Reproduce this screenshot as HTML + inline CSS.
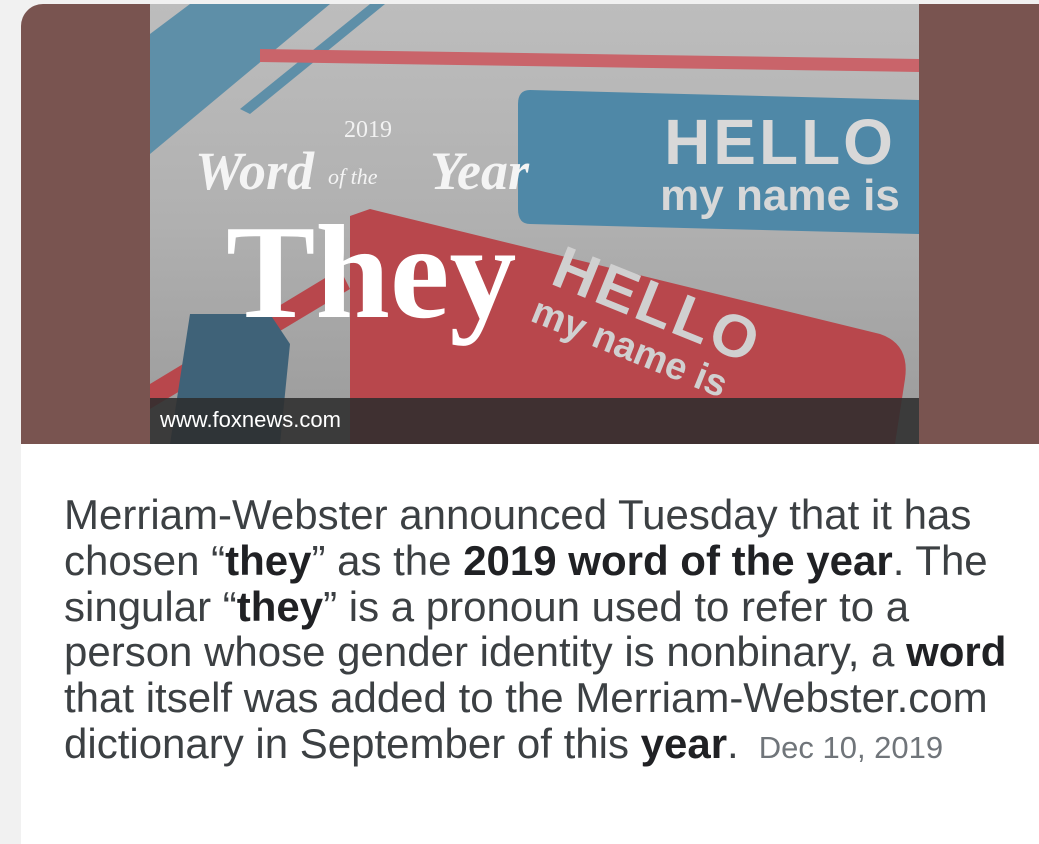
<!DOCTYPE html>
<html><head><meta charset="utf-8"><style>
html,body{margin:0;padding:0;width:1039px;height:834px;overflow:hidden;background:#f1f1f1;}
.card{position:absolute;left:21px;top:4px;width:1030px;height:840px;background:#fff;border-top-left-radius:22px;overflow:hidden;}
.top{position:absolute;left:0;top:0;width:1030px;height:440px;background:#795450;}
.img{position:absolute;left:129px;top:0;width:769px;height:440px;overflow:hidden;}
.cap{position:absolute;left:0;bottom:0;width:769px;height:46px;background:rgba(45,45,45,.88);color:#fff;font:22px "Liberation Sans",sans-serif;line-height:44px;padding-left:10px;box-sizing:border-box;}
.txt{position:absolute;left:43px;top:488px;font-family:"Liberation Sans",sans-serif;font-size:42px;line-height:45.8px;color:#3c4043;white-space:nowrap;}
.txt b{color:#202124;}
.date{font-size:31px;color:#70757a;margin-left:20px;}
</style></head><body>
<div class="card">
<div class="top"></div>
<div class="img">
<svg width="769" height="440" viewBox="0 0 769 440">
<defs><linearGradient id="g" x1="0" y1="0" x2="0" y2="1"><stop offset="0" stop-color="#bdbdbd"/><stop offset="0.5" stop-color="#b0b0b0"/><stop offset="1" stop-color="#9a9a9a"/></linearGradient></defs>
<rect width="769" height="440" fill="url(#g)"/>
<polygon points="0,30 40,0 180,0 0,150" fill="#5e8fa8"/>
<polygon points="220,0 235,0 100,110 90,105" fill="#5e8fa8"/>
<polygon points="110,45 769,55 769,68 110,58" fill="#c9646a"/>
<path d="M380,86 L769,96 L769,230 L380,220 Q368,220 368,205 L368,100 Q368,86 380,86Z" fill="#4f88a7"/>
<path d="M200,212 L220,205 L730,330 Q760,340 755,375 L745,440 L200,440 Z" fill="#b8474c"/>
<polygon points="0,380 190,265 200,285 0,405" fill="#b8474c"/>
<path d="M40,310 L120,310 L140,340 L130,440 L20,440 Z" fill="#3f6278"/>
<text x="630" y="160" font-family="Liberation Sans" font-weight="bold" font-size="64" fill="#d8d8d8" text-anchor="middle" letter-spacing="3">HELLO</text>
<text x="630" y="206" font-family="Liberation Sans" font-weight="bold" font-size="44" fill="#d8d8d8" text-anchor="middle">my name is</text>
<g transform="translate(500,320) rotate(22)"><text x="0" y="0" font-family="Liberation Sans" font-weight="bold" font-size="60" fill="#d0d0d0" text-anchor="middle" letter-spacing="3">HELLO</text><text x="-10" y="42" font-family="Liberation Sans" font-weight="bold" font-size="38" fill="#d0d0d0" text-anchor="middle">my name is</text></g>
<text x="218" y="133" font-family="Liberation Serif" font-size="24" fill="#f2f2f2" text-anchor="middle">2019</text>
<text x="45" y="185" font-family="Liberation Serif" font-style="italic" font-weight="bold" font-size="54" fill="#f4f4f4">Word</text>
<text x="178" y="180" font-family="Liberation Serif" font-style="italic" font-size="22" fill="#f4f4f4">of the</text>
<text x="280" y="185" font-family="Liberation Serif" font-style="italic" font-weight="bold" font-size="54" fill="#f4f4f4">Year</text>
<text x="76" y="313" font-family="Liberation Serif" font-weight="bold" font-size="134" fill="#ffffff">They</text>
</svg>
<div class="cap">www.foxnews.com</div>
</div>
<div class="txt">Merriam-Webster announced Tuesday that it has<br>chosen “<b>they</b>” as the <b>2019 word of the year</b>. The<br>singular “<b>they</b>” is a pronoun used to refer to a<br>person whose gender identity is nonbinary, a <b>word</b><br>that itself was added to the Merriam-Webster.com<br>dictionary in September of this <b>year</b>.<span class="date">Dec 10, 2019</span></div>
</div>
</body></html>
